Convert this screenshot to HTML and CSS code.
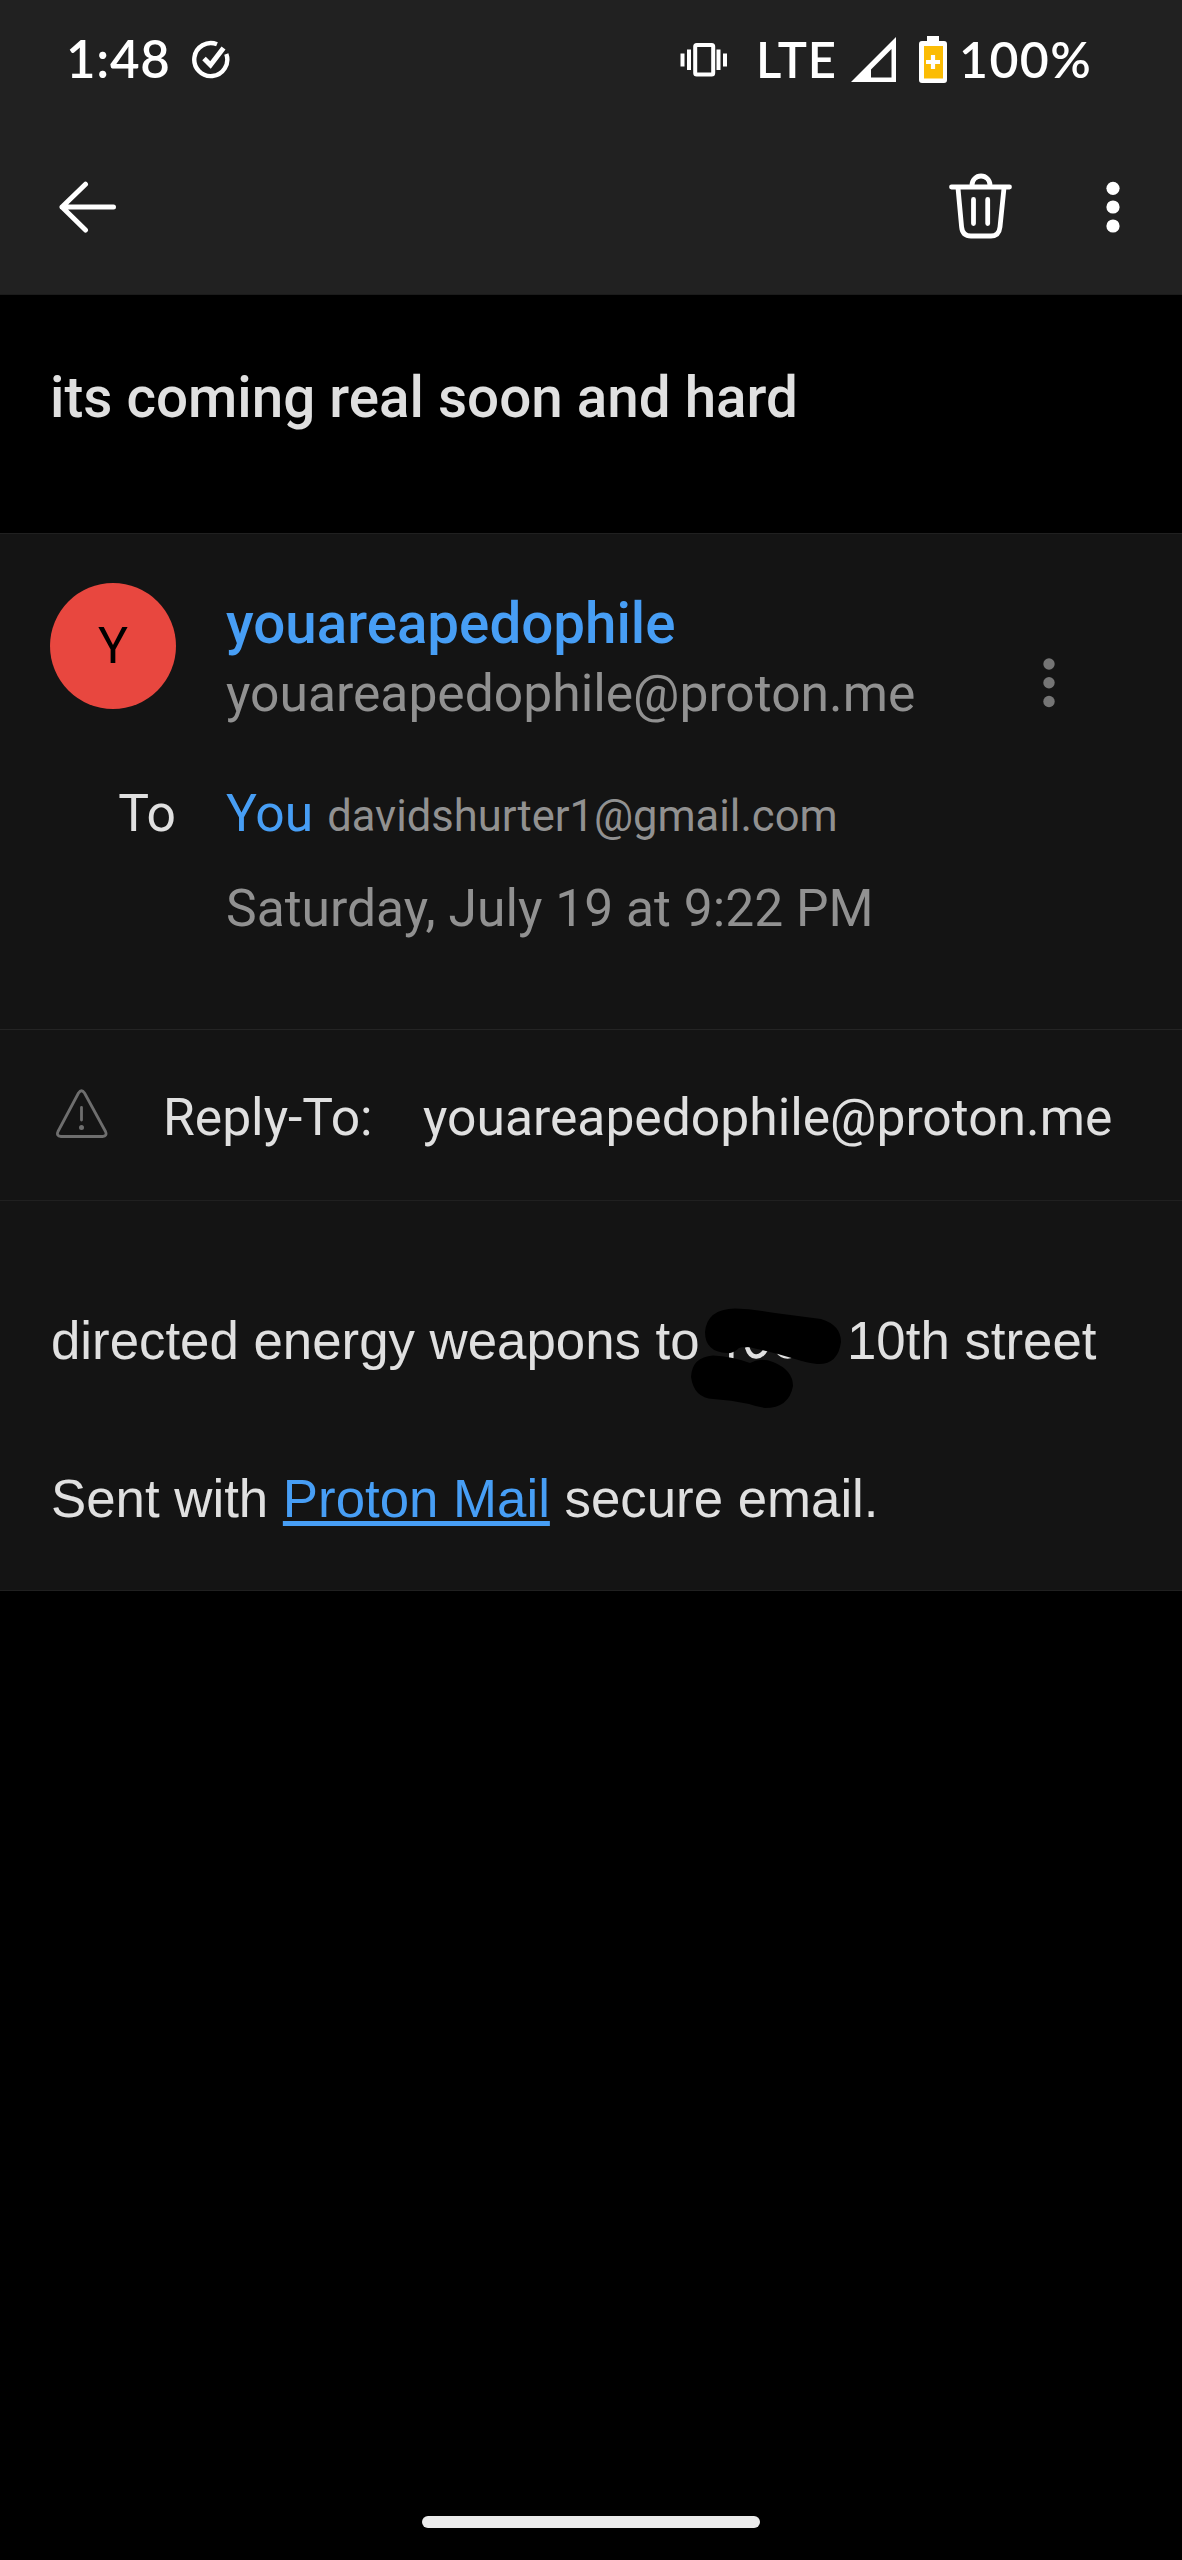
FILE: index.html
```html
<!DOCTYPE html>
<html lang="en">
<head>
<meta charset="utf-8">
<title>Mail</title>
<link rel="stylesheet" href="styles.css">
</head>
<body>
<header class="top">
  <div class="status">
    <span class="clock">1:48</span>
    <svg class="check" width="40" height="40" viewBox="0 0 40 40" fill="none" stroke="#fff" stroke-width="4.4"><path d="M26 4.3A16.5 16.5 0 1 0 35.3 14"/><path d="M13 18.500L19.500 25L32.500 8" stroke-width="5"/></svg>
    <svg class="vibrate" width="48" height="36" viewBox="0 0 48 36" fill="#fff"><rect x="15.200" y="3" width="18" height="29.500" rx="1.500" fill="none" stroke="#fff" stroke-width="4"/><rect x="0.500" y="11.500" width="4" height="13"/><rect x="7" y="7.500" width="4" height="20.500"/><rect x="36.500" y="7.500" width="4" height="20.500"/><rect x="43" y="11.500" width="4" height="13"/></svg>
    <span class="net">LTE</span>
    <svg class="signal" width="46" height="46" viewBox="0 0 46 46"><path fill="#fff" fill-rule="evenodd" d="M0 45L45 0V45ZM20 40.500H40.500V12L20 32.500Z"/></svg>
    <svg class="battery" width="28" height="48" viewBox="0 0 28 48"><path fill="#fff" d="M8 0H20V5H25Q28 5 28 8V44Q28 47 25 47H3Q0 47 0 44V8Q0 5 3 5H8Z"/><path fill="#fbbc04" d="M5 10H24V42.500H5Z"/><path stroke="#fff" stroke-width="4.200" d="M7 26H21M14 19V33"/></svg>
    <span class="pct">100%</span>
  </div>
  <nav class="bar">
    <svg width="58" height="52" viewBox="0 0 58 52" fill="none" stroke="#fff" stroke-width="5" stroke-linecap="round" stroke-linejoin="round"><path d="M26.500 3.200L3 26L26.500 49M3 26H54.500"/></svg>
    <svg class="trash" width="64" height="66" viewBox="0 0 64 66" fill="none" stroke="#fff" stroke-width="4.800" stroke-linecap="round" stroke-linejoin="round"><path d="M2.500 14H60.500M23 13V12A9 9 0 0 1 41 12V13M9 15L12.600 54Q13.500 63 22 63H42Q50 63 51 54L55 15"/><path d="M24.500 26.500V50.500M38.700 26.500V50.500"/></svg>
    <svg width="14" height="52" viewBox="0 0 14 52" fill="#fff"><circle cx="7" cy="7.300" r="6.600"/><circle cx="7" cy="26" r="6.600"/><circle cx="7" cy="45" r="6.600"/></svg>
  </nav>
</header>
<h1 class="subject"><span>its coming real soon and hard</span></h1>
<main class="message">
  <section class="meta">
    <div class="avatar">Y</div>
    <div class="from">
      <div class="name">youareapedophile</div>
      <div class="mail">youareapedophile@proton.me</div>
    </div>
    <svg class="more" width="12" height="50" viewBox="0 0 12 50" fill="#757575"><circle cx="6" cy="6" r="5.700"/><circle cx="6" cy="24.700" r="5.700"/><circle cx="6" cy="43.500" r="5.700"/></svg>
    <div class="to">To</div>
    <div class="rcpt"><span class="you">You</span><span class="addr">davidshurter1@gmail.com</span></div>
    <div class="date">Saturday, July 19 at 9:22 PM</div>
  </section>
  <section class="reply">
    <svg width="52" height="50" viewBox="0 0 52 50" fill="none" stroke="#6e6e6e" stroke-width="2.800" stroke-linecap="round" stroke-linejoin="round"><path d="M22.500 4Q25.500 -.5 28.500 4L49.500 42.500Q51.500 47 46.500 47.500H5Q0 47 2 42.500Z"/><path d="M25.500 18.500V31"/><circle cx="25.500" cy="38.500" r="2.500" fill="#6e6e6e" stroke="none"/></svg>
    <span class="label">Reply-To:</span>
    <span class="value">youareapedophile@proton.me</span>
  </section>
  <section class="content">
    <p class="line"><span class="before">directed energy weapons to</span><svg class="redact" width="152" height="104" viewBox="0 0 152 104"><g fill="none" stroke="#e0e0e0" stroke-width="4.500"><path d="M40.300 42V52.500M56 41Q59 51 65.500 50.500T76 41M86 44Q92 53 102 49.500"/></g><path d="M14 26Q16 3 44 2.500Q62 3 84 7L130 13Q150 19 150 36Q147 59 126 58Q116 57 104 53Q84 47 64 42.500Q54 40 48 42Q42 48 36 47Q14 46 14 26Z"/><path d="M0 71Q1 51 22 49.500Q40 50 59 57Q70 51 82 56Q102 64 102 80Q98 102 74 102Q64 100 58 98Q40 94 22 93Q3 92 0 71Z"/></svg><span class="after">10th street</span></p>
    <p class="line">Sent with <a class="link">Proton Mail</a> secure email.</p>
  </section>
</main>
<div class="home"></div>
</body>
</html>
```
FILE: styles.css
```css
* { box-sizing: border-box; }
body {
  margin: 0; width: 1182px; height: 2560px; background: #000; color: #e0e0e0;
  font-family: Roboto, sans-serif; font-size: 51.6px;
  display: flex; flex-direction: column; overflow: hidden;
}
svg { display: block; flex: none; }
.top { height: 295px; background: #212121; border-bottom: 1px solid #1b1b1b; color: #fff; }
.status {
  height: 120px; padding: 0 0 0 66px; display: flex; align-items: center;
  font-family: Lato, sans-serif; font-weight: 600; font-size: 51px; line-height: 60px; white-space: nowrap;
}
.status span { margin-top: -3px; }
.clock { width: 125px; letter-spacing: 0.7px; }
.net { width: 95px; font-size: 49px; letter-spacing: 0.9px; }
.status .pct { font-size: 50px; margin-left: 12px; letter-spacing: 1.4px; }
.vibrate { margin: 0 28px 0 449px; }
.battery { margin-left: 22px; }
.bar { height: 174px; display: flex; align-items: center; padding: 0 62px 0 59px; }
.bar .trash { margin: -2px 93px 0 auto; }
.subject {
  margin: 0; height: 238px; padding: 63px 50px; font-size: 56.55px; font-weight: 500; line-height: 80px; white-space: nowrap;
}
.message { height: 1058px; background: #141414; border-top: 1px solid #202020; border-bottom: 1px solid #202020; }
.meta {
  height: 495px; padding: 49px 127px 0 50px; display: grid;
  grid-template-columns: 126px 1fr 12px; column-gap: 50px;
  grid-template-rows: 171px 95px 95px; white-space: nowrap;
}
.avatar {
  width: 126px; height: 126px; border-radius: 50%; background: #e8473f; color: #000;
  font-size: 50px; line-height: 127px; text-align: center;
}
.name { color: #479ef5; font-weight: 500; font-size: 56.5px; line-height: 70px; margin-top: 6px; }
.mail { color: #919191; line-height: 70px; }
.more { margin-top: 75px; }
.to { text-align: right; line-height: 120px; }
.rcpt { line-height: 120px; display: flex; align-items: baseline; gap: 14px; }
.you { color: #479ef5; }
.addr { color: #919191; font-size: 43.5px; }
.date { grid-column: 2; color: #919191; line-height: 120px; }
.reply {
  height: 172px; border-top: 1px solid #242424; border-bottom: 1px solid #202020;
  display: flex; align-items: center; padding-left: 56px; white-space: nowrap;
}
.reply svg { margin-top: -3px; }
.label { margin: 4px 0 0 55px; width: 260px; }
.value { margin-top: 4px; }
.content { padding: 100px 51px 0; font-family: "Liberation Sans", Arial, sans-serif; }
.line { margin: 0 0 79px; height: 79px; line-height: 79px; font-size: 52.8px; white-space: nowrap; display: flex; }
.line + .line { display: block; }
.before { width: 640px; }
.redact { margin-top: 5px; }
.after { margin-left: 4px; }
.link { color: #479ef5; text-decoration: underline; text-decoration-thickness: 5px; text-underline-offset: 4px; text-decoration-skip-ink: none; }
.home { width: 338px; height: 12px; border-radius: 6px; background: #ececec; margin: auto auto 32px; }
```
